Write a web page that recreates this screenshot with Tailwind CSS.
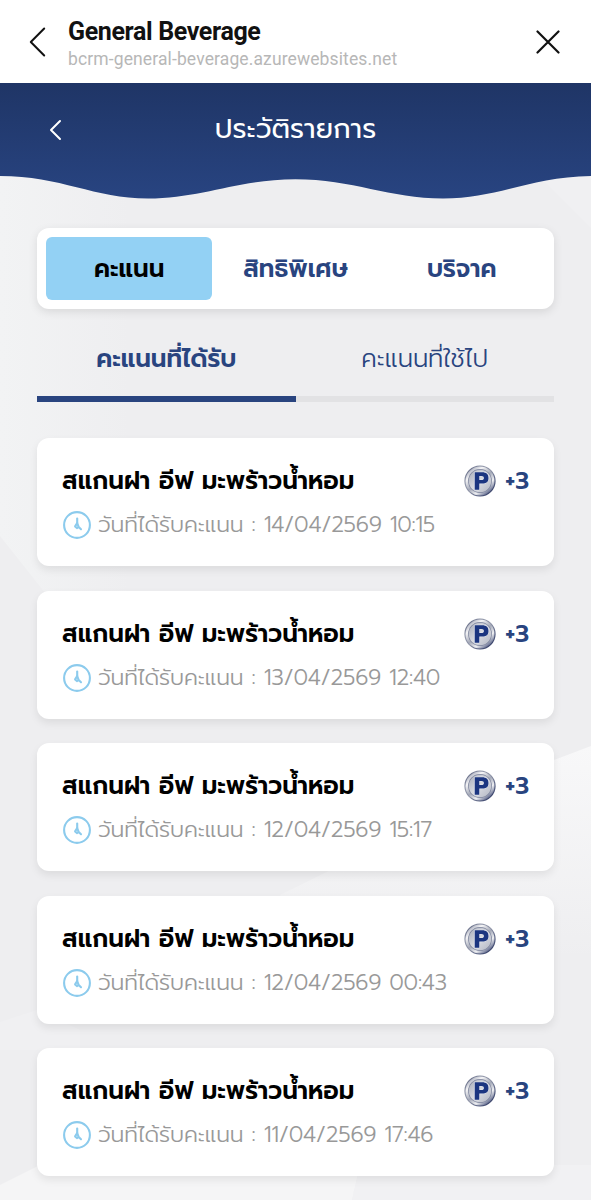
<!DOCTYPE html>
<html lang="th">
<head>
<meta charset="utf-8">
<title>General Beverage</title>
<script src="https://cdn.jsdelivr.net/npm/@tailwindcss/browser@4"></script>
</head>
<body class="h-[1200px] w-[591px] overflow-hidden bg-[#eeeef0] font-['Prompt','Kanit','Noto_Sans_Thai','Noto_Sans',sans-serif]">
<svg class="absolute size-0">
  <defs>
    <linearGradient id="rim" x1="0" y1="0" x2="1" y2="1">
      <stop offset="0" stop-color="#3a4264"/><stop offset=".25" stop-color="#8a90a4"/><stop offset=".5" stop-color="#8f94a8"/><stop offset=".75" stop-color="#4a5478"/><stop offset="1" stop-color="#27305a"/>
    </linearGradient>
    <linearGradient id="ring" x1="0" y1="0" x2=".8" y2="1">
      <stop offset="0" stop-color="#6f7690"/><stop offset=".3" stop-color="#f4f4f6"/><stop offset=".55" stop-color="#a4a9b8"/><stop offset=".75" stop-color="#eeeff2"/><stop offset="1" stop-color="#3a4571"/>
    </linearGradient>
    <linearGradient id="face" x1="0" y1="0" x2="1" y2="1">
      <stop offset="0" stop-color="#a8adbb"/><stop offset=".5" stop-color="#d9dbe1"/><stop offset="1" stop-color="#b3b7c4"/>
    </linearGradient>
  </defs>
  <symbol id="coin" viewBox="0 0 32 32">
    <circle cx="16" cy="16" r="15.600" fill="url(#rim)"/>
    <circle cx="16" cy="16" r="14.500" fill="url(#ring)"/>
    <circle cx="16" cy="16" r="11.900" fill="#7c839c"/>
    <circle cx="16" cy="16" r="11.200" fill="url(#face)"/>
    <path fill="#1b3580" stroke="#eceef5" stroke-width="1" paint-order="stroke" fill-rule="evenodd" d="M10.700 7.200h7.500c4.200 0 6.300 2.100 6.300 5.700s-2.100 5.700-6.300 5.700h-2.900v6.200H10.700zM15.300 10.900v4.200h2.300c1.500 0 2.300-.7 2.300-2.100s-.8-2.100-2.300-2.100z"/>
  </symbol>
  <symbol id="clock" viewBox="0 0 28 28">
    <g fill="none" stroke="#8ccbed" stroke-width="2.100" stroke-linecap="round" stroke-linejoin="round">
      <circle cx="14" cy="14" r="12.900"/>
      <path d="M14.200 7.500v4.500"/><path d="M14.200 12l1.500 4l-1.800 1.100l-1.800-1.700zM15.700 16l2.300 2.200"/>
    </g>
  </symbol>
</svg>

<div class="relative isolate flex h-full flex-col">
  <svg class="absolute inset-0 -z-10" width="591" height="1200" viewBox="0 0 591 1200">
    <defs>
      <linearGradient id="navy" x1="0" y1="0" x2="0" y2="1"><stop stop-color="#1f3566"/><stop offset="1" stop-color="#284481"/></linearGradient>
      <linearGradient id="fade" x1="0" y1="0" x2="0" y2="1"><stop stop-color="#f8f8f9"/><stop offset="1" stop-color="#f8f8f9" stop-opacity="0"/></linearGradient>
      <linearGradient id="fadeX" x1="0" y1="0" x2="1" y2="0"><stop stop-color="#f2f3f4"/><stop offset="1" stop-color="#f2f3f4" stop-opacity="0"/></linearGradient>
    </defs>
    <path d="M0 170H130V700L0 536Z" fill="url(#fadeX)"/>
    <path d="M540 178L591 170V228Z" fill="#f0f0f2"/>
    <path d="M591 746L554 760L280 895L330 960H591Z" fill="url(#fade)"/>
    <path d="M0 1022L37 1010L80 1030V1050H0Z" fill="#f0f0f2"/>
    <path d="M0 1185L40 1165H360L352 1200H0Z" fill="#f5f5f6"/>
    <path d="M360 1165H591V1200H352Z" fill="#f1f1f3"/>
    <path d="M0 83H591V176C530 177 497 198.500 443 198.500C390 198.500 352 179.200 295.500 179.200C239 179.200 201 198.500 148 198.500C94 198.500 61 176 0 176Z" fill="url(#navy)"/>
  </svg>

  <header class="flex h-[83px] shrink-0 items-center bg-white pl-[29px] pr-[31px] font-['Roboto']">
    <svg class="mr-[22px] shrink-0" width="17" height="30" viewBox="0 0 17 30" fill="none" stroke="#111" stroke-width="2" stroke-linecap="round" stroke-linejoin="round"><path d="M15.200 1.500L1.800 15L15.200 28.500"/></svg>
    <div class="flex grow flex-col pt-[1px]">
      <h1 class="h-[29px] whitespace-nowrap text-[25px] font-bold leading-[29px] tracking-[-0.36px] text-[#111]">General Beverage</h1>
      <p class="h-[22px] whitespace-nowrap text-[17.500px] leading-[26px] tracking-[0.12px] text-[#b7b7b7]">bcrm-general-beverage.azurewebsites.net</p>
    </div>
    <svg class="shrink-0" width="24" height="26" viewBox="0 0 24 26" fill="none" stroke="#111" stroke-width="2.200" stroke-linecap="round"><path d="M1.500 2.500L22.500 23.500M22.500 2.500L1.500 23.500"/></svg>
  </header>

  <div class="flex h-[93px] shrink-0 items-center px-[49px]">
    <svg class="shrink-0" width="13" height="22" viewBox="0 0 13 22" fill="none" stroke="#fff" stroke-width="2" stroke-linecap="round" stroke-linejoin="round"><path d="M11 2L2 11L11 20"/></svg>
    <h2 class="grow pb-[2px] pr-[13px] text-center text-[27.500px] leading-[36px] text-white">ประวัติรายการ</h2>
  </div>

  <main class="flex flex-col px-[37px] pt-[52px]">
    <nav class="grid h-[81px] grid-cols-3 rounded-[12px] bg-white p-[9px] text-center text-[24.500px] font-semibold leading-[63px] text-[#29447f] shadow-[0_3px_10px_rgba(0,0,0,0.1)]">
      <div class="rounded-[6px] bg-[#93d1f4] text-black">คะแนน</div>
      <div>สิทธิพิเศษ</div>
      <div>บริจาค</div>
    </nav>
    <div class="mt-[23px] grid h-[70px] grid-cols-2 text-center text-[24.500px] leading-[54px] text-[#29447f]">
      <div class="border-b-[6px] border-[#29447f] font-semibold">คะแนนที่ได้รับ</div>
      <div class="border-b-[6px] border-[#e2e2e4] font-light">คะแนนที่ใช้ไป</div>
    </div>
    <div id="list" class="mt-[36px] flex flex-col gap-[24.500px]"></div>
  </main>
</div>
<script>
const dates = ['14/04/2569 10:15', '13/04/2569 12:40', '12/04/2569 15:17', '12/04/2569 00:43', '11/04/2569 17:46'];
document.getElementById('list').innerHTML = dates.map(d => `
  <article class="flex h-[128px] flex-col rounded-[12px] bg-white px-[25px] pt-[25px] shadow-[0_4px_8px_rgba(0,0,0,0.08)]">
    <div class="flex h-[36px] items-center">
      <h3 class="grow whitespace-nowrap text-[24.500px] font-semibold leading-[36px] tracking-[0.04px] text-black">สแกนฝา อีฟ มะพร้าวน้ำหอม</h3>
      <svg class="mr-[9px] size-[32px] shrink-0"><use href="#coin"/></svg>
      <b class="text-[24px] font-semibold leading-[36px] text-[#29447f]">+3</b>
    </div>
    <div class="mt-[8px] flex h-[36px] items-center">
      <svg class="ml-px mr-[7px] size-[28px] shrink-0"><use href="#clock"/></svg>
      <p class="whitespace-pre text-[22px] font-light leading-[36px] text-[#999]"><span class="tracking-[-0.12px]">วันที่ได้รับคะแนน : </span><time class="tracking-[-0.27px]">${d}</time></p>
    </div>
  </article>`).join('');
</script>
</body>
</html>
